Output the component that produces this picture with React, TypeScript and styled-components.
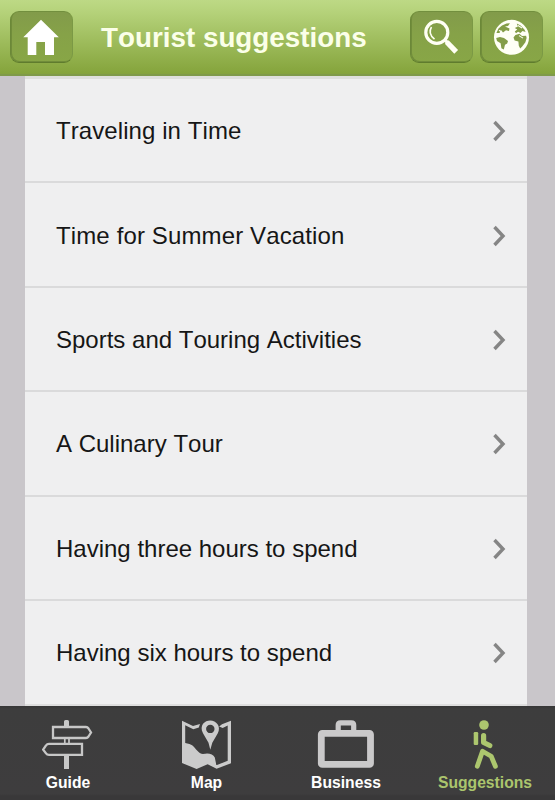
import React from 'react';
import styled, { createGlobalStyle } from 'styled-components';

const GlobalStyle = createGlobalStyle`
  * { box-sizing: border-box; }
  body { margin: 0; font-family: "Liberation Sans", Arial, sans-serif; font-kerning: none; background: #c9c6ca; }
`;

const Screen = styled.div`
  width: 555px;
  height: 800px;
  display: flex;
  flex-direction: column;
  overflow: hidden;
  background: #c9c6ca;
`;

const Header = styled.header`
  flex: 0 0 76px;
  display: flex;
  align-items: flex-start;
  padding: 11px 12px 0 10px;
  background: linear-gradient(#bdd985 0, #b5d27a 12px, #86a53d 72px, #84a23d 74px);
  border-bottom: 2px solid #7f9a49;
`;

const HeaderButton = styled.button`
  width: 63px;
  height: 52px;
  padding: 0;
  border: 1px solid #6f8a3c;
  border-color: #728f3e #7b9945 #5f7c2d #6b8838;
  border-radius: 9px;
  background: linear-gradient(#829b4a, #86a248 45%, #88a646);
  box-shadow: inset 1px -1px 0 #718d3b;
  display: flex;
  align-items: center;
  justify-content: center;
  & + & { margin-left: 7px; }
  svg { display: block; flex: none; }
`;

const Title = styled.h1`
  flex: 1;
  margin: 0 0 0 28px;
  font-size: 27.8px;
  line-height: 53px;
  font-weight: 700;
  color: #fbffe9;
  white-space: nowrap;
`;

const List = styled.main`
  flex: 1;
  min-height: 0;
  margin: 0 28px 0 25px;
  background: #efeff0;
  border-top: 3px solid #dedfdc;
  border-bottom: 2px solid #dedede;
  overflow: hidden;
`;

const Row = styled.div<{ $tracking: number }>`
  height: 104.4px;
  display: flex;
  align-items: center;
  justify-content: space-between;
  padding: 2px 20px 0 31px;
  border-bottom: 2px solid #dadadb;
  font-size: 24px;
  letter-spacing: ${p => p.$tracking}px;
  color: #161616;
  white-space: nowrap;
  &:last-child { border-bottom-color: transparent; }
`;

const TabBar = styled.nav`
  flex: 0 0 94px;
  display: grid;
  grid-template-columns: 136px 141px 138px 140px;
  background: linear-gradient(#363636, #3d3d3d 3px, #3e3d3e 88px, #393839 90px);
`;

const Tab = styled.div<{ $active?: boolean }>`
  display: flex;
  flex-direction: column;
  align-items: center;
  padding-top: 12px;
  color: ${p => (p.$active ? '#abc56d' : '#ffffff')};
  font-size: 15.7px;
  line-height: 18px;
  font-weight: 700;
  svg { display: block; margin-bottom: 4px; }
`;

const rows = [
  { label: 'Traveling in Time', tracking: 0.08 },
  { label: 'Time for Summer Vacation', tracking: 0.13 },
  { label: 'Sports and Touring Activities', tracking: 0 },
  { label: 'A Culinary Tour', tracking: 0 },
  { label: 'Having three hours to spend', tracking: 0 },
  { label: 'Having six hours to spend', tracking: 0 },
];

const Chevron = () => (
  <svg width="16" height="22" viewBox="0 0 16 22">
    <path d="M3.5 2 L12 11 L3.5 20" fill="none" stroke="#858585" strokeWidth="3.4" />
  </svg>
);

const HomeIcon = () => (
  <svg width="61" height="50" viewBox="11 12 61 50">
    <path d="M41 19.7 L58.8 37.2 H54 V55 H45 V42 H36.3 V55 H27.7 V37.2 H23.3 Z" fill="#fff" />
  </svg>
);

const SearchIcon = () => (
  <svg width="61" height="50" viewBox="411 12 61 50" fill="none" stroke="#fffff4">
    <circle cx="436.8" cy="32.4" r="11" strokeWidth="3.2" />
    <path d="M431.5 27 Q427.5 33.5 434.5 39.2" strokeWidth="1.6" />
    <path d="M444.8 40 L448 43" strokeWidth="3.2" />
    <path d="M446.7 42 L456.2 51.8" strokeWidth="5.3" />
  </svg>
);

const GlobeIcon = () => (
  <svg width="61" height="50" viewBox="481 12 61 50">
    <circle cx="511.5" cy="37.3" r="17.5" fill="#fffff6" />
    <g fill="#849d48">
      <path d="M496.4 33 L498.5 28.5 L502 25.5 L506.5 23.6 L510 23.3 L508 26 L505 26.5 L509.5 28.5 L509 31 L506 30.2 L503 32.6 L501 30 L499.5 33 Z" />
      <path d="M496.2 38 L500 37.1 L504 38 L508 41 L507.2 43.5 L505 44.7 L503.8 49.4 L501.4 48.3 L500.6 43.3 L497 41 Z" />
      <path d="M516.8 23.5 L520.6 25.6 L524.4 29.5 L525.6 32 L522.5 31 L520.5 33 L518.1 31.7 L516 33.3 L514.8 31.4 L517.3 29.4 L514.8 28 L517.9 26.5 Z" />
      <path d="M515.4 35 L519.5 33.8 L522 36.1 L526.1 35.7 L526.6 38 L525.4 42.2 L522.2 46.5 L520.2 48.6 L518.8 45.7 L518.4 41.6 L514.6 40.5 L513.5 37.6 Z" />
    </g>
    <path d="M499 30.2 L501 31.5 M518 25.5 L522 28 M519 35.6 L523 38.1" stroke="#fffff6" strokeWidth="1.1" />
  </svg>
);

const GuideIcon = () => (
  <svg width="52" height="52" viewBox="42 718 52 52" fill="none" stroke="#c7c7c7" strokeWidth="2.3">
    <path d="M64 726 V721.5 Q64 720 65.5 720 H67.5 Q69 720 69 721.5 V726 Z M64 755 H69 V769 H64 Z" fill="#c7c7c7" stroke="none" />
    <path d="M53 727 H86 Q87.5 727 88.5 728.5 L91 732.5 L88.5 736.5 Q87.5 738 86 738 H53 Z" />
    <path d="M82 743.8 H49 Q47 743.8 46 745.5 L43.2 749.6 L46 753.4 Q47 754.8 49 754.8 H82 Z" />
    <path d="M64.8 738 V743.5 M69 738 V743.5" strokeWidth="1.7" />
  </svg>
);

const MapIcon = () => (
  <svg width="52" height="52" viewBox="181 718 52 52">
    <path d="M182 720.7 L193 726 L200 724 L198.8 727.6 L193.3 729.2 L185.2 725.2 V743 C188 744 190.8 743.5 194 747 C197 750.5 199 753.4 203 754.1 C208 752.7 213 753.8 214.8 757.4 L216.3 764.9 L217 765.1 L227.7 760.7 V725.5 L222.7 728 L219.1 726.5 L222 724.2 L231 720.7 V763.2 L216.6 768.8 L207.6 764.3 L196.6 769 L182 763 Z" fill="#cbcbcb" />
    <path fillRule="evenodd" d="M210.3 749.7 L208.5 742.7 L203 733.3 C199 725.2 204.7 720.5 210.3 720.5 C216 720.5 221.5 726 217.8 733.3 L212.3 742.7 Z M210.3 724.7 A4.2 4.2 0 1 0 210.3 733.1 A4.2 4.2 0 1 0 210.3 724.7 Z" fill="#cbcbcb" />
  </svg>
);

const BusinessIcon = () => (
  <svg width="58" height="52" viewBox="317 718 58 52" fill="none" stroke="#cac9ca">
    <path d="M338.2 730 V725 Q338.2 722.8 340.6 722.8 H351.3 Q353.7 722.8 353.7 725 V730" strokeWidth="5.2" />
    <rect x="321.3" y="733.4" width="49.2" height="31" rx="1" strokeWidth="6.8" />
  </svg>
);

const WalkerIcon = () => (
  <svg width="52" height="52" viewBox="459 718 52 52" fill="none" stroke="#acc66e">
    <circle cx="484" cy="725" r="4.8" fill="#acc66e" stroke="none" />
    <rect x="473.7" y="732" width="4.5" height="13" rx="1.2" fill="#acc66e" stroke="none" />
    <path d="M483.6 735.7 V742.5 L489.8 745.5" strokeWidth="5.2" strokeLinecap="round" strokeLinejoin="round" />
    <path d="M477.3 766.3 L482.5 751.2 L491.2 756.3 L495.4 766.3" strokeWidth="4.8" strokeLinecap="round" strokeLinejoin="round" />
  </svg>
);

export default function App() {
  return (
    <Screen>
      <GlobalStyle />
      <Header>
        <HeaderButton aria-label="Home"><HomeIcon /></HeaderButton>
        <Title>Tourist suggestions</Title>
        <HeaderButton aria-label="Search"><SearchIcon /></HeaderButton>
        <HeaderButton aria-label="Language"><GlobeIcon /></HeaderButton>
      </Header>
      <List>
        {rows.map(({ label, tracking }) => (
          <Row key={label} $tracking={tracking}><span>{label}</span><Chevron /></Row>
        ))}
      </List>
      <TabBar>
        <Tab><GuideIcon />Guide</Tab>
        <Tab><MapIcon />Map</Tab>
        <Tab><BusinessIcon />Business</Tab>
        <Tab $active><WalkerIcon />Suggestions</Tab>
      </TabBar>
    </Screen>
  );
}
